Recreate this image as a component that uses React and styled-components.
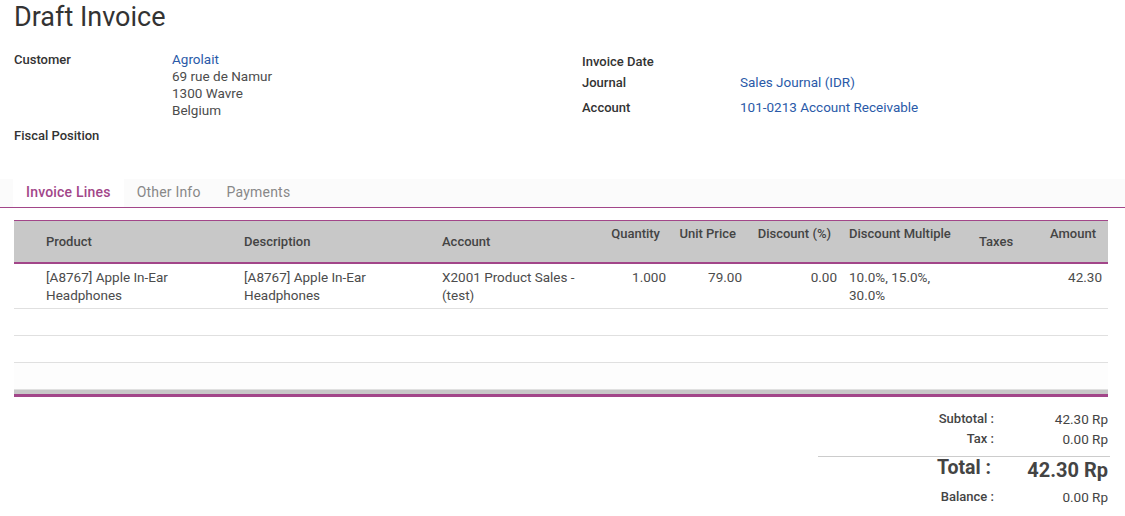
import React from "react";
import styled, { createGlobalStyle } from "styled-components";

const Global = createGlobalStyle`
  html, body { margin: 0; padding: 0; background: #fff; }
  body { font-family: Roboto, "Liberation Sans", sans-serif; font-size: 13.5px; color: #4c4c4c; }
  * { box-sizing: border-box; }
`;

const PURPLE = "#a24689";
const LINK = "#2a5aa8";

const Sheet = styled.div`
  width: 1125px;
  padding-bottom: 12px;
`;

const Title = styled.h1`
  margin: 0;
  padding: 0 14px;
  height: 36px;
  line-height: 34px;
  font-size: 27px;
  font-weight: 400;
  color: #333;
`;

const FormGrid = styled.div`
  display: grid;
  grid-template-columns: 568px 1fr;
  padding: 15px 14px 0;
`;

const Group = styled.div`
  display: flex;
  flex-direction: column;
  padding-top: ${(p) => p.$top || 0}px;
`;

const Field = styled.div`
  display: grid;
  grid-template-columns: 158px 1fr;
  min-height: ${(p) => p.$h || 22}px;
  line-height: 17px;
`;

const Label = styled.div`
  font-weight: 500;
  font-size: 13px;
  color: #333;
  padding-top: ${(p) => p.$pt || 0}px;
`;

const Value = styled.div`
  color: ${(p) => (p.$link ? LINK : "#4c4c4c")};
  display: flex;
  flex-direction: column;
`;

const Link = styled.span`
  color: ${LINK};
`;

const TabBar = styled.div`
  margin-top: 30px;
  display: flex;
  background: #fbfbfb;
  border-bottom: 1px solid ${PURPLE};
  padding-left: 13px;
  height: 29px;
`;

const Tab = styled.div`
  padding: 0 13px;
  line-height: 27px;
  font-size: 14px;
  letter-spacing: 0.2px;
  font-weight: ${(p) => (p.$active ? 500 : 400)};
  color: ${(p) => (p.$active ? PURPLE : "#888")};
  background: ${(p) => (p.$active ? "#fff" : "transparent")};
`;

const TableWrap = styled.div`
  margin: 12px 17px 0 14px;
`;

const Table = styled.table`
  width: 1094px;
  border-collapse: collapse;
  table-layout: fixed;
`;

const HeadRow = styled.tr`
  background: #c8c8c8;
  border-top: 1px solid ${PURPLE};
  border-bottom: 2px solid ${PURPLE};
`;

const Th = styled.th`
  height: 42px;
  padding: ${(p) => (p.$top ? "4px" : "0")} ${(p) => (p.$right ? "12px" : "6px")} 0 6px;
  text-align: ${(p) => (p.$right ? "right" : "left")};
  vertical-align: ${(p) => (p.$top ? "top" : "middle")};
  font-weight: 500;
  font-size: 13px;
  color: #444;
  line-height: 17px;
  white-space: nowrap;
`;

const Row = styled.tr`
  border-bottom: 1px solid #e0e0e0;
  background: ${(p) => (p.$faint ? "#fdfdfd" : "#fff")};
`;

const Td = styled.td`
  height: ${(p) => p.$h || 27}px;
  padding: 4px ${(p) => p.$pr || 6}px 4px 6px;
  vertical-align: top;
  text-align: ${(p) => (p.$right ? "right" : "left")};
  line-height: 18px;
  color: #4c4c4c;
`;

const FootRow = styled.tr`
  background: #c8c8c8;
  border-top: 1px solid ${PURPLE};
  border-bottom: 3px solid ${PURPLE};
`;

const FootCell = styled.td`
  height: 6px;
  padding: 0;
`;

const Totals = styled.div`
  display: flex;
  justify-content: flex-end;
  padding: 12px 15px 0 0;
`;

const TotalsTable = styled.div`
  width: 292px;
  display: grid;
  grid-template-columns: 1fr 114px;
  align-items: start;
`;

const TLabel = styled.div`
  text-align: right;
  padding-right: ${(p) => (p.$big ? 5 : 2)}px;
  font-weight: ${(p) => (p.$big ? 700 : 500)};
  font-size: ${(p) => (p.$big ? 19.5 : 13)}px;
  color: #444;
  height: ${(p) => p.$h || 20}px;
  line-height: ${(p) => p.$lh || 20}px;
`;

const TValue = styled.div`
  text-align: right;
  padding-right: 2px;
  font-weight: ${(p) => (p.$big ? 700 : 400)};
  font-size: ${(p) => (p.$big ? 20 : 13.5)}px;
  color: #444;
  height: ${(p) => p.$h || 20}px;
  line-height: ${(p) => p.$lh || 20}px;
`;

const Divider = styled.div`
  grid-column: 1 / 3;
  border-top: 1px solid #ccc;
  margin: 7px 0 0;
`;

const cols = [26, 198, 198, 164, 72, 76, 95, 130, 62, 73];

export default function App() {
  return (
    <Sheet>
      <Global />
      <Title>Draft Invoice</Title>
      <FormGrid>
        <Group>
          <Field $h={76}>
            <Label>Customer</Label>
            <Value>
              <Link>Agrolait</Link>
              <span>69 rue de Namur</span>
              <span>1300 Wavre</span>
              <span>Belgium</span>
            </Value>
          </Field>
          <Field>
            <Label>Fiscal Position</Label>
            <Value />
          </Field>
        </Group>
        <Group $top={1}>
          <Field $h={22}>
            <Label $pt={1}>Invoice Date</Label>
            <Value />
          </Field>
          <Field $h={25}>
            <Label>Journal</Label>
            <Value $link>Sales Journal (IDR)</Value>
          </Field>
          <Field $h={25}>
            <Label>Account</Label>
            <Value $link>101-0213 Account Receivable</Value>
          </Field>
        </Group>
      </FormGrid>

      <TabBar>
        <Tab $active>Invoice Lines</Tab>
        <Tab>Other Info</Tab>
        <Tab>Payments</Tab>
      </TabBar>

      <TableWrap>
        <Table>
          <colgroup>
            {cols.map((w, i) => (
              <col key={i} style={{ width: w }} />
            ))}
          </colgroup>
          <thead>
            <HeadRow>
              <Th />
              <Th>Product</Th>
              <Th>Description</Th>
              <Th>Account</Th>
              <Th $right $top>Quantity</Th>
              <Th $right $top>Unit Price</Th>
              <Th $right $top>Discount (%)</Th>
              <Th $top>Discount Multiple</Th>
              <Th>Taxes</Th>
              <Th $right $top>Amount</Th>
            </HeadRow>
          </thead>
          <tbody>
            <Row>
              <Td $h={43} />
              <Td>[A8767] Apple In-Ear Headphones</Td>
              <Td>[A8767] Apple In-Ear Headphones</Td>
              <Td>X2001 Product Sales - (test)</Td>
              <Td $right>1.000</Td>
              <Td $right>79.00</Td>
              <Td $right>0.00</Td>
              <Td $pr={16}>10.0%, 15.0%, 30.0%</Td>
              <Td />
              <Td $right>42.30</Td>
            </Row>
            {[0, 1, 2].map((r) => (
              <Row key={r} $faint={r === 2}>
                {cols.map((_, i) => (
                  <Td key={i} />
                ))}
              </Row>
            ))}
          </tbody>
          <tfoot>
            <FootRow>
              <FootCell colSpan={10} />
            </FootRow>
          </tfoot>
        </Table>
      </TableWrap>

      <Totals>
        <TotalsTable>
          <TLabel>Subtotal :</TLabel>
          <TValue>42.30 Rp</TValue>
          <TLabel>Tax :</TLabel>
          <TValue>0.00 Rp</TValue>
          <Divider />
          <TLabel $big $h={30} $lh={22}>Total :</TLabel>
          <TValue $big $h={30} $lh={26}>42.30 Rp</TValue>
          <TLabel>Balance :</TLabel>
          <TValue>0.00 Rp</TValue>
        </TotalsTable>
      </Totals>
    </Sheet>
  );
}
